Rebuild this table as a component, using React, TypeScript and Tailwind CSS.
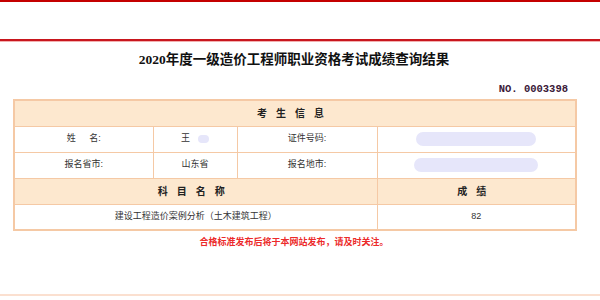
import React from "react";

const sans = "font-['Liberation_Sans','Noto_Sans_CJK_SC',sans-serif]";

function Blob({ w }: { w: string }) {
  return <span className={`inline-block h-[14px] rounded-full bg-[#e6e6fa] align-middle ${w}`} />;
}

export default function App() {
  const cell = "border border-[#f5c9a5] text-center text-[9px] text-[#333]";
  const head = "border border-[#f5c9a5] bg-[#fde8cf] text-center text-[10px] font-bold text-[#222]";

  return (
    <div className={`h-[300px] w-[600px] overflow-hidden bg-white ${sans}`}>
      <div className="h-[2px] bg-[#c40000]" />
      <div className="h-[37px]" />
      <div className="h-[2px] bg-[#c8161d]" />
      <div className="h-px bg-[#f3b0b0]" />

      <h1 className="mt-[8px] ml-[13px] w-[562px] text-center font-['Liberation_Serif','Noto_Sans_CJK_SC',serif] text-[13.5px] font-bold leading-[20px] text-[#111]">
        2020年度一级造价工程师职业资格考试成绩查询结果
      </h1>

      <div className="mt-[13px] flex justify-end pr-[32px]">
        <span className="font-['Liberation_Mono',monospace] text-[10.5px] font-bold leading-[12px] text-[#3a1838]">
          NO. 0003398
        </span>
      </div>

      <table className="mt-[4px] ml-[13px] w-[562px] table-fixed border-collapse border-2 border-[#f5c9a5]">
        <colgroup>
          <col className="w-[139px]" />
          <col className="w-[84px]" />
          <col className="w-[140px]" />
          <col className="w-[199px]" />
        </colgroup>
        <tbody>
          <tr className="h-[26px]">
            <td colSpan={4} className={`${head} tracking-[9px]`}>
              考生信息
            </td>
          </tr>
          <tr className="h-[26px]">
            <td className={cell}>姓&emsp;&ensp;名:</td>
            <td className={cell}>
              <span className="inline-flex items-center gap-[8px]">
                王<span className="inline-block h-[8px] w-[11px] rounded-full bg-[#e6e6fa]" />
              </span>
            </td>
            <td className={cell}>证件号码:</td>
            <td className={cell}>
              <Blob w="w-[120px]" />
            </td>
          </tr>
          <tr className="h-[26px]">
            <td className={cell}>报名省市:</td>
            <td className={cell}>山东省</td>
            <td className={cell}>报名地市:</td>
            <td className={cell}>
              <Blob w="w-[124px]" />
            </td>
          </tr>
          <tr className="h-[26px]">
            <td colSpan={3} className={`${head} tracking-[9px]`}>
              科目名称
            </td>
            <td className={`${head} tracking-[9px]`}>成绩</td>
          </tr>
          <tr className="h-[26px]">
            <td colSpan={3} className={cell}>
              建设工程造价案例分析（土木建筑工程）
            </td>
            <td className={cell}>82</td>
          </tr>
        </tbody>
      </table>

      <p className="mt-[5px] ml-[13px] w-[562px] text-center text-[9px] leading-[12px] font-bold text-[#ec2a2a]">
        合格标准发布后将于本网站发布，请及时关注。
      </p>

      <div className="mt-[46px] h-[2px] bg-[#fbe0d0]" />
    </div>
  );
}
